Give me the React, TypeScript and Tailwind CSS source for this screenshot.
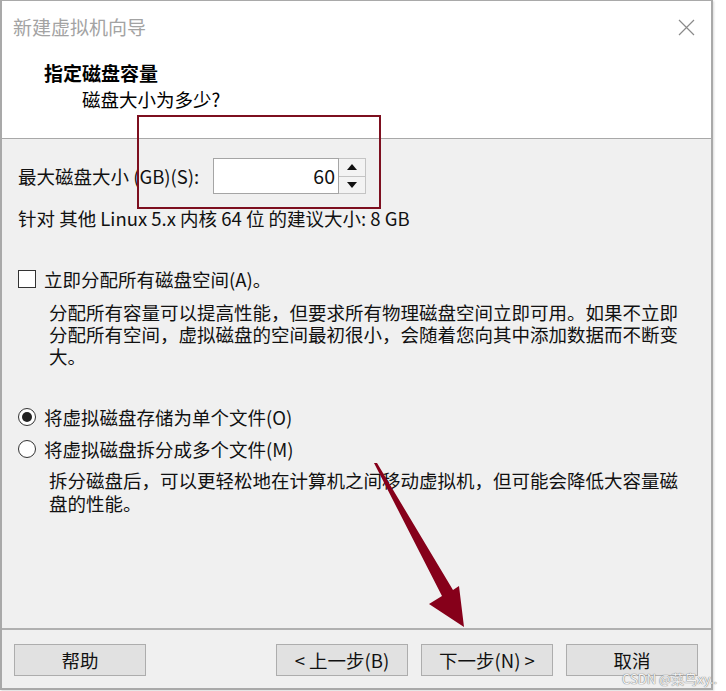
export default function App() {
  const font = "font-['Noto_Sans_CJK_SC','Noto_Sans',sans-serif]";
  return (
    <div className={`relative w-[726px] h-[691px] bg-white overflow-hidden ${font} text-[#111] text-[18.5px]`}>
      <div className="flex flex-col w-[713px] h-[690px] border-t border-l-2 border-r-2 border-b-2 border-[#a9a9a9] shadow-[1px_1px_2px_rgba(0,0,0,0.15)]">
        {/* title bar */}
        <div className="h-[53px] flex items-center justify-between pl-[11px] pr-[16px] bg-white">
          <span className="text-[19px] text-[#a3a3a3]">新建虚拟机向导</span>
          <svg width="17" height="17" viewBox="0 0 17 17">
            <path d="M1 1 L16 16 M16 1 L1 16" stroke="#8a8a8a" strokeWidth="1.2" fill="none" />
          </svg>
        </div>
        {/* header */}
        <div className="h-[84px] bg-white border-b border-[#a8a8a8] box-content">
          <div className="pl-[42px] pt-[7px] h-[33px] leading-[24px] font-bold text-[19px] text-black">指定磁盘容量</div>
          <div className="pl-[80px] h-[24px] leading-[24px] text-black">磁盘大小为多少?</div>
        </div>
        {/* body */}
        <div className="flex-1 bg-[#f0f0f0] pl-[16px] flex flex-col">
          <div className="mt-[19px] h-[36px] flex items-center">
            <span className="w-[195px] leading-[24px]">最大磁盘大小 (GB)(S):</span>
            <div className="w-[126px] h-[36px] border border-[#a5a5a5] bg-white flex items-center justify-end pr-[3px] leading-none text-[19.5px]">60</div>
            <div className="w-[27px] h-[36px] flex flex-col border border-l-0 border-[#c4c4c4] bg-[#f3f3f3]">
              <div className="flex-1 flex items-center justify-center border-b border-[#c4c4c4]">
                <svg width="10" height="6" viewBox="0 0 10 6"><path d="M0 6 L5 0 L10 6 Z" fill="#111" /></svg>
              </div>
              <div className="flex-1 flex items-center justify-center">
                <svg width="10" height="6" viewBox="0 0 10 6"><path d="M0 0 L5 6 L10 0 Z" fill="#111" /></svg>
              </div>
            </div>
          </div>
          <div className="mt-[12px] h-[24px] leading-[24px]">针对 其他 Linux 5.x 内核 64 位 的建议大小: 8 GB</div>
          <div className="mt-[37px] h-[24px] flex items-center gap-[8px]">
            <div className="w-[18px] h-[18px] border border-[#333] bg-white" />
            <span className="leading-[24px]">立即分配所有磁盘空间(A)。</span>
          </div>
          <div className="mt-[10px] ml-[31px] leading-[22px]">
            <div>分配所有容量可以提高性能，但要求所有物理磁盘空间立即可用。如果不立即</div>
            <div>分配所有空间，虚拟磁盘的空间最初很小，会随着您向其中添加数据而不断变</div>
            <div>大。</div>
          </div>
          <div className="mt-[38px] h-[24px] flex items-center gap-[8px]">
            <div className="w-[18px] h-[18px] rounded-full border border-[#333] bg-white flex items-center justify-center">
              <div className="w-[10px] h-[10px] rounded-full bg-[#222]" />
            </div>
            <span className="leading-[24px]">将虚拟磁盘存储为单个文件(O)</span>
          </div>
          <div className="mt-[8px] h-[24px] flex items-center gap-[8px]">
            <div className="w-[18px] h-[18px] rounded-full border border-[#333] bg-white" />
            <span className="leading-[24px]">将虚拟磁盘拆分成多个文件(M)</span>
          </div>
          <div className="mt-[8px] ml-[31px] leading-[23px]">
            <div>拆分磁盘后，可以更轻松地在计算机之间移动虚拟机，但可能会降低大容量磁</div>
            <div>盘的性能。</div>
          </div>
        </div>
        {/* footer */}
        <div className="h-[60px] border-t-2 border-[#b0b0b0] bg-[#f0f0f0] flex items-start pt-[14px] pl-[12px] pr-[13px]">
          <button className="w-[132px] h-[32px] bg-[#e1e1e1] border border-[#adadad] leading-none text-[#111]">帮助</button>
          <div className="ml-auto flex gap-[13px]">
            <button className="w-[132px] h-[32px] bg-[#e1e1e1] border border-[#adadad] leading-none text-[#111]">&lt; 上一步(B)</button>
            <button className="w-[132px] h-[32px] bg-[#e1e1e1] border border-[#adadad] leading-none text-[#111]">下一步(N) &gt;</button>
            <button className="w-[132px] h-[32px] bg-[#e1e1e1] border border-[#adadad] leading-none text-[#111]">取消</button>
          </div>
        </div>
      </div>

      {/* red highlight rectangle */}
      <div className="absolute left-[137px] top-[115px] w-[244px] h-[94px] border-2 border-[#7d0f1f] pointer-events-none" />

      {/* arrow */}
      <svg className="absolute left-0 top-0 pointer-events-none" width="726" height="691" viewBox="0 0 726 691">
        <polygon points="374,463 377,463 453,590 459,586 464,627 429,604 442,596" fill="#86001a" />
      </svg>

      {/* watermark */}
      <div className="absolute left-[622px] top-[669px] text-[13px] leading-[20px] text-[#f4f4f4] [text-shadow:0_0_1px_#777,0_0_1px_#777]">CSDN @菜鸟xy..</div>
    </div>
  );
}
